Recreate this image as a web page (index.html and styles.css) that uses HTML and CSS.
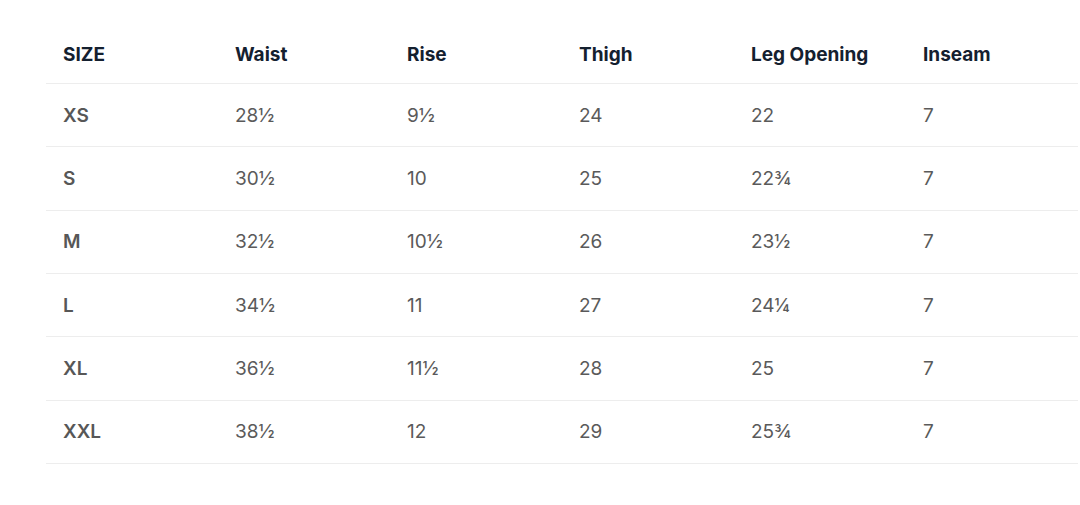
FILE: index.html
```html
<!DOCTYPE html>
<html>
<head>
<meta charset="utf-8">
<link rel="stylesheet" href="styles.css">
</head>
<body>
<div class="wrap">
<table class="size-table">
<thead>
<tr><th>SIZE</th><th>Waist</th><th>Rise</th><th>Thigh</th><th>Leg Opening</th><th>Inseam</th></tr>
</thead>
<tbody>
<tr><td class="sz">XS</td><td>28½</td><td>9½</td><td>24</td><td>22</td><td>7</td></tr>
<tr><td class="sz">S</td><td>30½</td><td>10</td><td>25</td><td>22¾</td><td>7</td></tr>
<tr><td class="sz">M</td><td>32½</td><td>10½</td><td>26</td><td>23½</td><td>7</td></tr>
<tr><td class="sz">L</td><td>34½</td><td>11</td><td>27</td><td>24¼</td><td>7</td></tr>
<tr><td class="sz">XL</td><td>36½</td><td>11½</td><td>28</td><td>25</td><td>7</td></tr>
<tr><td class="sz">XXL</td><td>38½</td><td>12</td><td>29</td><td>25¾</td><td>7</td></tr>
</tbody>
</table>
</div>
</body>
</html>
```
FILE: styles.css
```css
html, body {
  margin: 0;
  padding: 0;
  background: #ffffff;
}
.wrap {
  padding: 25px 0 0 46px;
}
.size-table {
  border-collapse: collapse;
  width: 1032px;
  table-layout: fixed;
  font-family: Inter, "Liberation Sans", sans-serif;
}
.size-table th,
.size-table td {
  text-align: left;
  padding: 0 0 0 17px;
  vertical-align: middle;
  border-bottom: 1px solid #ededed;
}
.size-table th {
  height: 58px;
  font-size: 19px;
  font-weight: 700;
  color: #14202f;
}
.size-table td {
  height: 62.33px;
  font-size: 19px;
  font-weight: 400;
  color: #5a5a5a;
}
.size-table td.sz {
  font-weight: 600;
  color: #575757;
}
```
